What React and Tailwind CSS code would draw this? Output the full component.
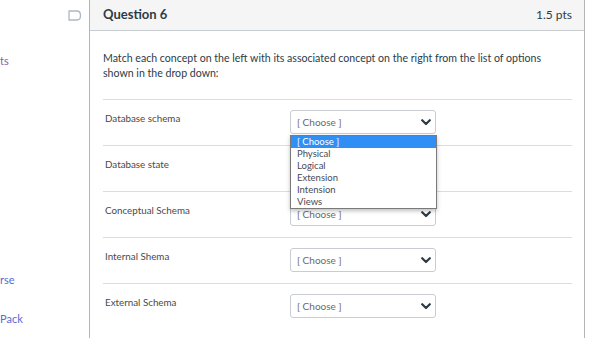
import React from 'react';

const rows = ['Database schema', 'Database state', 'Conceptual Schema', 'Internal Shema', 'External Schema'];
const options = ['[ Choose ]', 'Physical', 'Logical', 'Extension', 'Intension', 'Views'];

const Chevron = () => (
  <svg width="10" height="7" viewBox="0 0 10 7" className="text-[#2d3b45]">
    <path d="M1.2 1.2 L5 5 L8.8 1.2" fill="none" stroke="currentColor" strokeWidth="2.2" strokeLinecap="round" strokeLinejoin="round" />
  </svg>
);

const SelectBox = () => (
  <div className="flex h-[24px] w-[146px] items-center justify-between rounded-[3px] border border-[#c9cdd1] bg-white pl-[6px] pr-[4px]">
    <span className="text-[10px] text-[#6b6b6b]">[ Choose ]</span>
    <Chevron />
  </div>
);

const App = () => {
  return (
    <div className="flex h-[338px] w-[602px] overflow-hidden bg-white font-['Lato','Open_Sans',sans-serif] text-[#2d3b45]">
      <aside className="flex w-[89px] shrink-0 flex-col">
        <div className="flex h-[30px] items-center justify-end pr-[7px]">
          <svg width="14" height="11" viewBox="0 0 14 11">
            <path d="M1 1 H9 Q12.5 1 12.5 5.5 Q12.5 10 9 10 H1 Z" fill="none" stroke="#a9b8c6" strokeWidth="1.3" strokeLinejoin="round" />
          </svg>
        </div>
        <div className="mt-[23px] text-[11px] leading-[15px] text-[#8e5aa8]">ts</div>
        <div className="mt-[204px] text-[11px] leading-[15px] text-[#5a6ad4]">rse</div>
        <div className="mt-[24px] text-[11px] leading-[15px] text-[#5a6ad4]">Pack</div>
      </aside>

      <section className="w-[496px] shrink-0 border-x border-[#b5b5b5]">
        <header className="flex h-[31px] items-center justify-between border-b border-[#c7cdd1] bg-[#f5f5f5] pl-[13px] pr-[12px]">
          <h2 className="text-[13px] font-bold text-[#2d3b45]">Question 6</h2>
          <span className="text-[12px] text-[#2d3b45]">1.5 pts</span>
        </header>

        <div className="pl-[13px] pr-[12px] pt-[20px]">
          <p className="text-[10.6px] leading-[15px]">
            Match each concept on the left with its associated concept on the right from the list of options shown in the drop down:
          </p>

          <div className="mt-[18px]">
            {rows.map((label, i) => (
              <div key={label} className="flex border-t border-[#dcdcdc] pb-[11px] pl-[2px] pt-[10px]">
                <div className="w-[185px] shrink-0 pt-[1px] text-[9.8px] text-[#4a4a4a]">{label}</div>
                <div className="relative">
                  {i === 1 ? (
                    <div className="h-[24px] w-[146px] rounded-[3px] border border-[#c9cdd1] bg-white" />
                  ) : (
                    <SelectBox />
                  )}
                  {i === 0 && (
                    <ul className="absolute left-0 top-[25px] z-10 w-[147px] border border-[#7a7a7a] bg-white py-0 shadow-[0_2px_4px_rgba(0,0,0,0.25)]">
                      {options.map((opt, j) => (
                        <li
                          key={opt}
                          className={
                            j === 0
                              ? 'h-[12px] bg-[#2f8ff5] pl-[6px] text-[9.5px] leading-[12px] text-white'
                              : 'h-[12px] pl-[6px] text-[9.5px] leading-[12px] text-[#4a4a55]'
                          }
                        >
                          {opt}
                        </li>
                      ))}
                    </ul>
                  )}
                </div>
              </div>
            ))}
          </div>
        </div>
      </section>
    </div>
  );
};

export default App;
